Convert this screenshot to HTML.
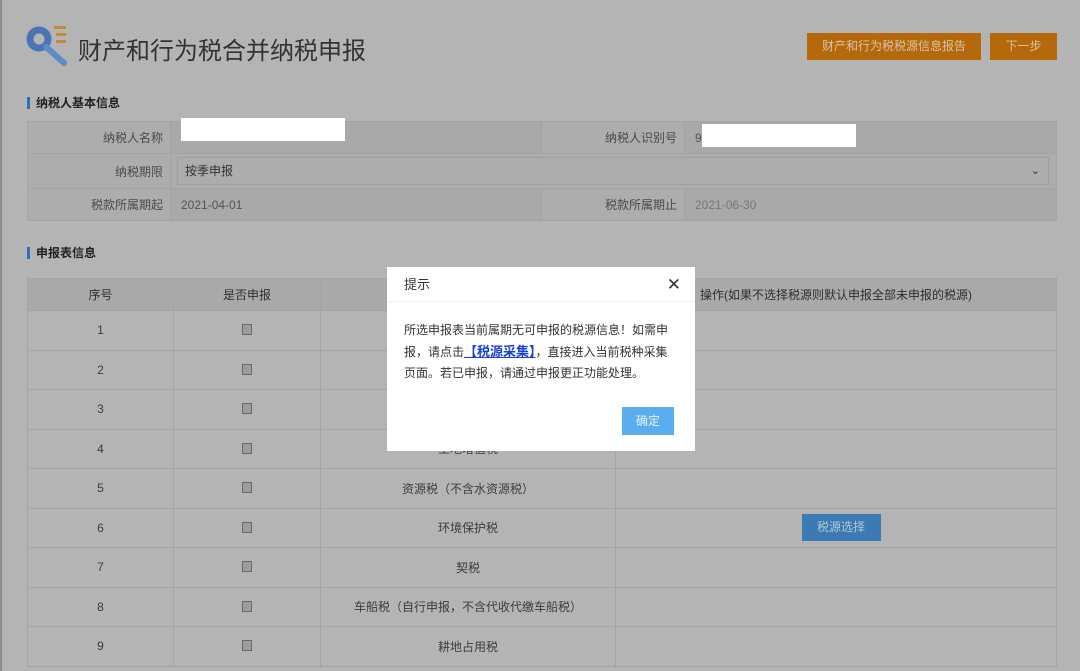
<!DOCTYPE html>
<html><head><meta charset="utf-8"><style>
*{margin:0;padding:0;box-sizing:border-box}
body{width:1080px;height:671px;overflow:hidden;background:#b4b4b4;font-family:"Liberation Sans","Noto Sans CJK SC",sans-serif;position:relative;color:#444;font-size:12px}
.abs{position:absolute}
.btn{position:absolute;background:#b5690a;color:#d8c3a6;font-size:12px;text-align:center;line-height:27px}
.sec{position:absolute;left:27px;font-weight:bold;font-size:12px;color:#222;border-left:3px solid #2a6fb8;padding-left:6px;line-height:12px}
table{border-collapse:collapse;position:absolute}
td{border:1px solid #a4a4a4}
.info td{height:32px;font-size:12px}
.info .l{text-align:right;padding-right:7px;color:#4a4a4a;background:#adadad}
.info .v{padding-left:10px;color:#555;background:#a9a9a9}
.main td{text-align:center;height:39.5px;color:#3c3c3c;font-size:12px}
.main tr.h td{height:32px;background:#a9a9a9;color:#2e2e2e}
.cb{display:inline-block;width:10px;height:11px;border:1px solid #6a6a6a;background:#9c9c9c;vertical-align:middle;margin-bottom:2px}
</style></head><body>
<div class="abs" style="left:0;top:0;width:2px;height:671px;background:#8c8c8c"></div>
<svg class="abs" style="left:26px;top:24px" width="44" height="44" viewBox="0 0 44 44">
<circle cx="13" cy="15" r="9" fill="none" stroke="#4a74b4" stroke-width="7"/>
<line x1="20" y1="23" x2="38" y2="39" stroke="#5a8cc8" stroke-width="6" stroke-linecap="round"/>
<rect x="28" y="2" width="12" height="3" fill="#c48a3c"/><rect x="30" y="9" width="10" height="3" fill="#c48a3c"/><rect x="30" y="16" width="10" height="3" fill="#c48a3c"/>
</svg>
<div class="abs" style="left:78px;top:31px;font-size:24px;color:#333">财产和行为税合并纳税申报</div>
<div class="btn" style="left:807px;top:33px;width:174px">财产和行为税税源信息报告</div>
<div class="btn" style="left:990px;top:33px;width:67px">下一步</div>
<div class="sec" style="top:97px">纳税人基本信息</div>
<table class="info" style="left:27px;top:121px;width:1030px">
<tr><td class="l" style="width:143px">纳税人名称</td><td class="v" style="width:371px"></td><td class="l" style="width:143px">纳税人识别号</td><td class="v">9</td></tr>
<tr><td class="l" style="height:35px">纳税期限</td><td colspan="3" style="padding:3px 7px 3px 6px;background:#adadad"><div style="border:1px solid #a0a0a0;height:28px;line-height:27px;padding-left:7px;color:#333;position:relative">按季申报<span style="position:absolute;right:8px;top:0;font-size:11px">&#8964;</span></div></td></tr>
<tr><td class="l">税款所属期起</td><td class="v">2021-04-01</td><td class="l">税款所属期止</td><td class="v" style="color:#777">2021-06-30</td></tr>
</table>
<div class="abs" style="left:181px;top:118px;width:164px;height:23px;background:#fff"></div>
<div class="abs" style="left:702px;top:124px;width:154px;height:23px;background:#fff"></div>
<div class="sec" style="top:247px">申报表信息</div>
<table class="main" style="left:27px;top:278px;width:1030px">
<tr class="h"><td style="width:146px">序号</td><td style="width:147px">是否申报</td><td style="width:295px">税种</td><td>操作(如果不选择税源则默认申报全部未申报的税源)</td></tr>
<tr><td>1</td><td><span class="cb"></span></td><td>城镇土地使用税</td><td></td></tr>
<tr><td>2</td><td><span class="cb"></span></td><td>房产税</td><td></td></tr>
<tr><td>3</td><td><span class="cb"></span></td><td>印花税</td><td></td></tr>
<tr><td>4</td><td><span class="cb"></span></td><td>土地增值税</td><td></td></tr>
<tr><td>5</td><td><span class="cb"></span></td><td>资源税（不含水资源税）</td><td></td></tr>
<tr><td>6</td><td><span class="cb"></span></td><td>环境保护税</td><td><span style="display:inline-block;width:79px;height:27px;line-height:27px;background:#3b7ab4;color:#b5c6d6;margin-left:10px">税源选择</span></td></tr>
<tr><td>7</td><td><span class="cb"></span></td><td>契税</td><td></td></tr>
<tr><td>8</td><td><span class="cb"></span></td><td>车船税（自行申报，不含代收代缴车船税）</td><td></td></tr>
<tr><td>9</td><td><span class="cb"></span></td><td>耕地占用税</td><td></td></tr>
</table>
<div class="abs" style="left:387px;top:267px;width:308px;height:184px;background:#fff">
<div style="height:35px;border-bottom:1px solid #eee;line-height:35px;padding-left:17px;font-size:13px;color:#333">提示<span style="position:absolute;right:14px;top:0;font-size:17px;color:#333">✕</span></div>
<div style="padding:18px 18px 0 17px;font-size:12px;line-height:21px;color:#333">所选申报表当前属期无可申报的税源信息！如需申报，请点击<a style="color:#1a3fd8;font-weight:bold;text-decoration:underline;font-size:13px">【税源采集】</a>，直接进入当前税种采集页面。若已申报，请通过申报更正功能处理。</div>
<div style="position:absolute;left:235px;top:140px;width:52px;height:28px;background:#5aaef0;color:#e8f3fc;text-align:center;line-height:28px;font-size:12px">确定</div>
</div>
</body></html>
